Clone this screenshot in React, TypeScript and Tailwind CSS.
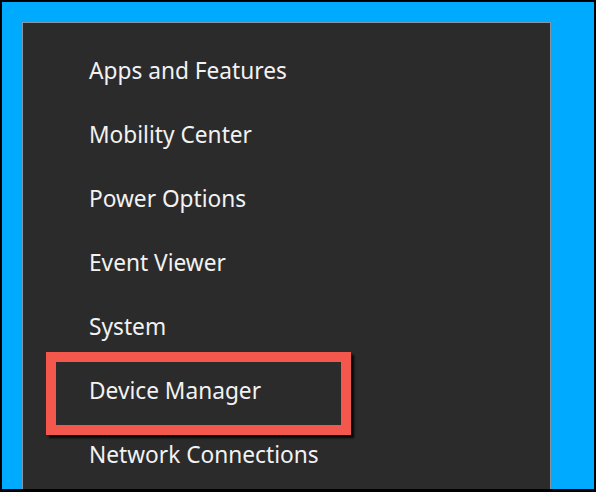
import React from "react";

const items = [
  "Apps and Features",
  "Mobility Center",
  "Power Options",
  "Event Viewer",
  "System",
  "Device Manager",
  "Network Connections",
];

export default function App() {
  return (
    <div className="w-[596px] h-[492px] overflow-hidden bg-black pt-[2px] pl-[2px] pr-[2px] pb-[3px]">
      <div className="w-full h-full bg-[#00aaff] pt-[20px] pl-[20px] overflow-hidden">
        <div className="relative w-[529px] h-[600px] bg-[#2b2b2b] border border-[#8795a0] pt-[16px]">
          {items.map((t) => (
            <div
              key={t}
              className="h-16 flex items-center pl-[66px] text-[22.7px] text-[#f2f2f2] font-['Noto_Sans',sans-serif]"
            >
              {t}
            </div>
          ))}
          <div className="absolute left-[23px] top-[329px] w-[305px] h-[83px] border-[10px] border-[#f4574c] shadow-[3px_3px_2px_rgba(0,0,0,0.85)]" />
        </div>
      </div>
    </div>
  );
}
